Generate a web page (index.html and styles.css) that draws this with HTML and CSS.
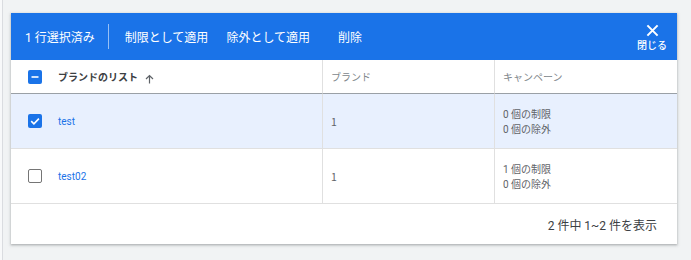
FILE: index.html
```html
<!DOCTYPE html>
<html lang="ja">
<head>
<meta charset="utf-8">
<link rel="stylesheet" href="styles.css">
</head>
<body>
<div class="page">
  <div class="card">
    <div class="actionbar">
      <span class="count">1 行選択済み</span>
      <span class="divider"></span>
      <span class="action a1">制限として適用</span>
      <span class="action a2">除外として適用</span>
      <span class="action a3">削除</span>
      <span class="spacer"></span>
      <div class="close">
        <svg width="13" height="13" viewBox="0 0 14 14"><path d="M1.5 1.5 L12.5 12.5 M12.5 1.5 L1.5 12.5" stroke="#fff" stroke-width="2.2" fill="none"/></svg>
        <span class="close-label">閉じる</span>
      </div>
    </div>
    <div class="grid">
      <div class="cell head first">
        <span class="cb cb-on"><svg width="14" height="14" viewBox="0 0 14 14"><rect x="3.5" y="6.2" width="7" height="1.6" fill="#fff"/></svg></span>
        <span class="head-main">ブランドのリスト</span>
        <svg class="sort" width="9" height="10" viewBox="0 0 9 10"><path d="M4.5 9.5 V1.5 M1 5 L4.5 1.5 L8 5" stroke="#5f6368" stroke-width="1.2" fill="none"/></svg>
      </div>
      <div class="cell head">ブランド</div>
      <div class="cell head last">キャンペーン</div>

      <div class="cell first sel">
        <span class="cb cb-on"><svg width="14" height="14" viewBox="0 0 14 14"><path d="M3.2 7.2 L5.9 9.8 L10.9 4.6" stroke="#fff" stroke-width="1.6" fill="none"/></svg></span>
        <span class="link">test</span>
      </div>
      <div class="cell sel val"><span class="num">1</span></div>
      <div class="cell sel last camp"><span>0 個の制限</span><span>0 個の除外</span></div>

      <div class="cell first">
        <span class="cb cb-off"></span>
        <span class="link">test02</span>
      </div>
      <div class="cell val"><span class="num">1</span></div>
      <div class="cell last camp"><span>1 個の制限</span><span>0 個の除外</span></div>
    </div>
    <div class="footer">2 件中 1~2 件を表示</div>
  </div>
</div>
</body>
</html>
```
FILE: styles.css
```css
html, body {
  margin: 0;
  padding: 0;
}
body {
  background: #f8f9fa;
  font-family: Roboto, "Noto Sans CJK JP", sans-serif;
  color: #3c4043;
  height: 260px;
  overflow: hidden;
}
.page {
  margin-left: 2px;
  border-left: 1px solid #dadce0;
  background: #f1f3f4;
  height: 260px;
  padding: 13px 14px 0 8px;
  box-sizing: border-box;
}
.card {
  background: #fff;
  box-shadow: 0 1px 2px rgba(60, 64, 67, 0.3), 0 1px 3px 1px rgba(60, 64, 67, 0.12);
}
.actionbar {
  height: 47px;
  background: #1a73e8;
  display: flex;
  align-items: center;
  color: #fff;
  font-size: 12px;
  padding-left: 14px;
  padding-right: 10px;
}
.count {
  margin-top: -1px;
}
.divider {
  width: 1px;
  height: 25px;
  background: rgba(255, 255, 255, 0.55);
  margin: 0 16px 0 13px;
}
.action {
  margin-top: -1px;
}
.a2 { margin-left: 18px; }
.a3 { margin-left: 28px; }
.spacer { flex: 1; }
.close {
  display: flex;
  flex-direction: column;
  align-items: center;
  padding-top: 2px;
}
.close svg { display: block; }
.close-label {
  font-size: 10px;
  font-weight: 500;
  margin-top: 3px;
  line-height: 12px;
}
.grid {
  display: grid;
  grid-template-columns: 312px 172px 1fr;
}
.cell {
  display: flex;
  align-items: center;
  border-right: 1px solid #e0e0e0;
  border-bottom: 1px solid #e0e0e0;
  font-size: 10px;
  color: #5f6368;
  padding-left: 8px;
  height: 54px;
}
.cell.last { border-right: none; }
.cell.head {
  height: 33px;
  border-bottom: 1px solid #9aa0a6;
  color: #80868b;
}
.cell.first { padding-left: 17px; }
.cell.sel { background: #e8f0fe; }
.num {
  color: #5f6368;
  font-family: "Noto Sans CJK JP", sans-serif;
  font-size: 10.5px;
}
.head-main {
  font-weight: 700;
  color: #3c4043;
  margin-left: 16px;
}
.sort {
  margin-left: 7px;
  margin-top: 4px;
}
.cb {
  width: 14px;
  height: 14px;
  box-sizing: border-box;
  border-radius: 2px;
  display: inline-block;
  flex: none;
}
.cb svg { display: block; }
.cb-on { background: #1a73e8; }
.cb-off { border: 1.5px solid #757575; }
.link {
  color: #1a73e8;
  margin-left: 16px;
}
.camp {
  flex-direction: column;
  align-items: flex-start;
  justify-content: center;
  line-height: 15px;
}
.camp span:first-child { margin-top: 2px; }
.footer {
  height: 40px;
  display: flex;
  align-items: center;
  justify-content: flex-end;
  padding-right: 20px;
  font-size: 12px;
  color: #3c4043;
}
```
